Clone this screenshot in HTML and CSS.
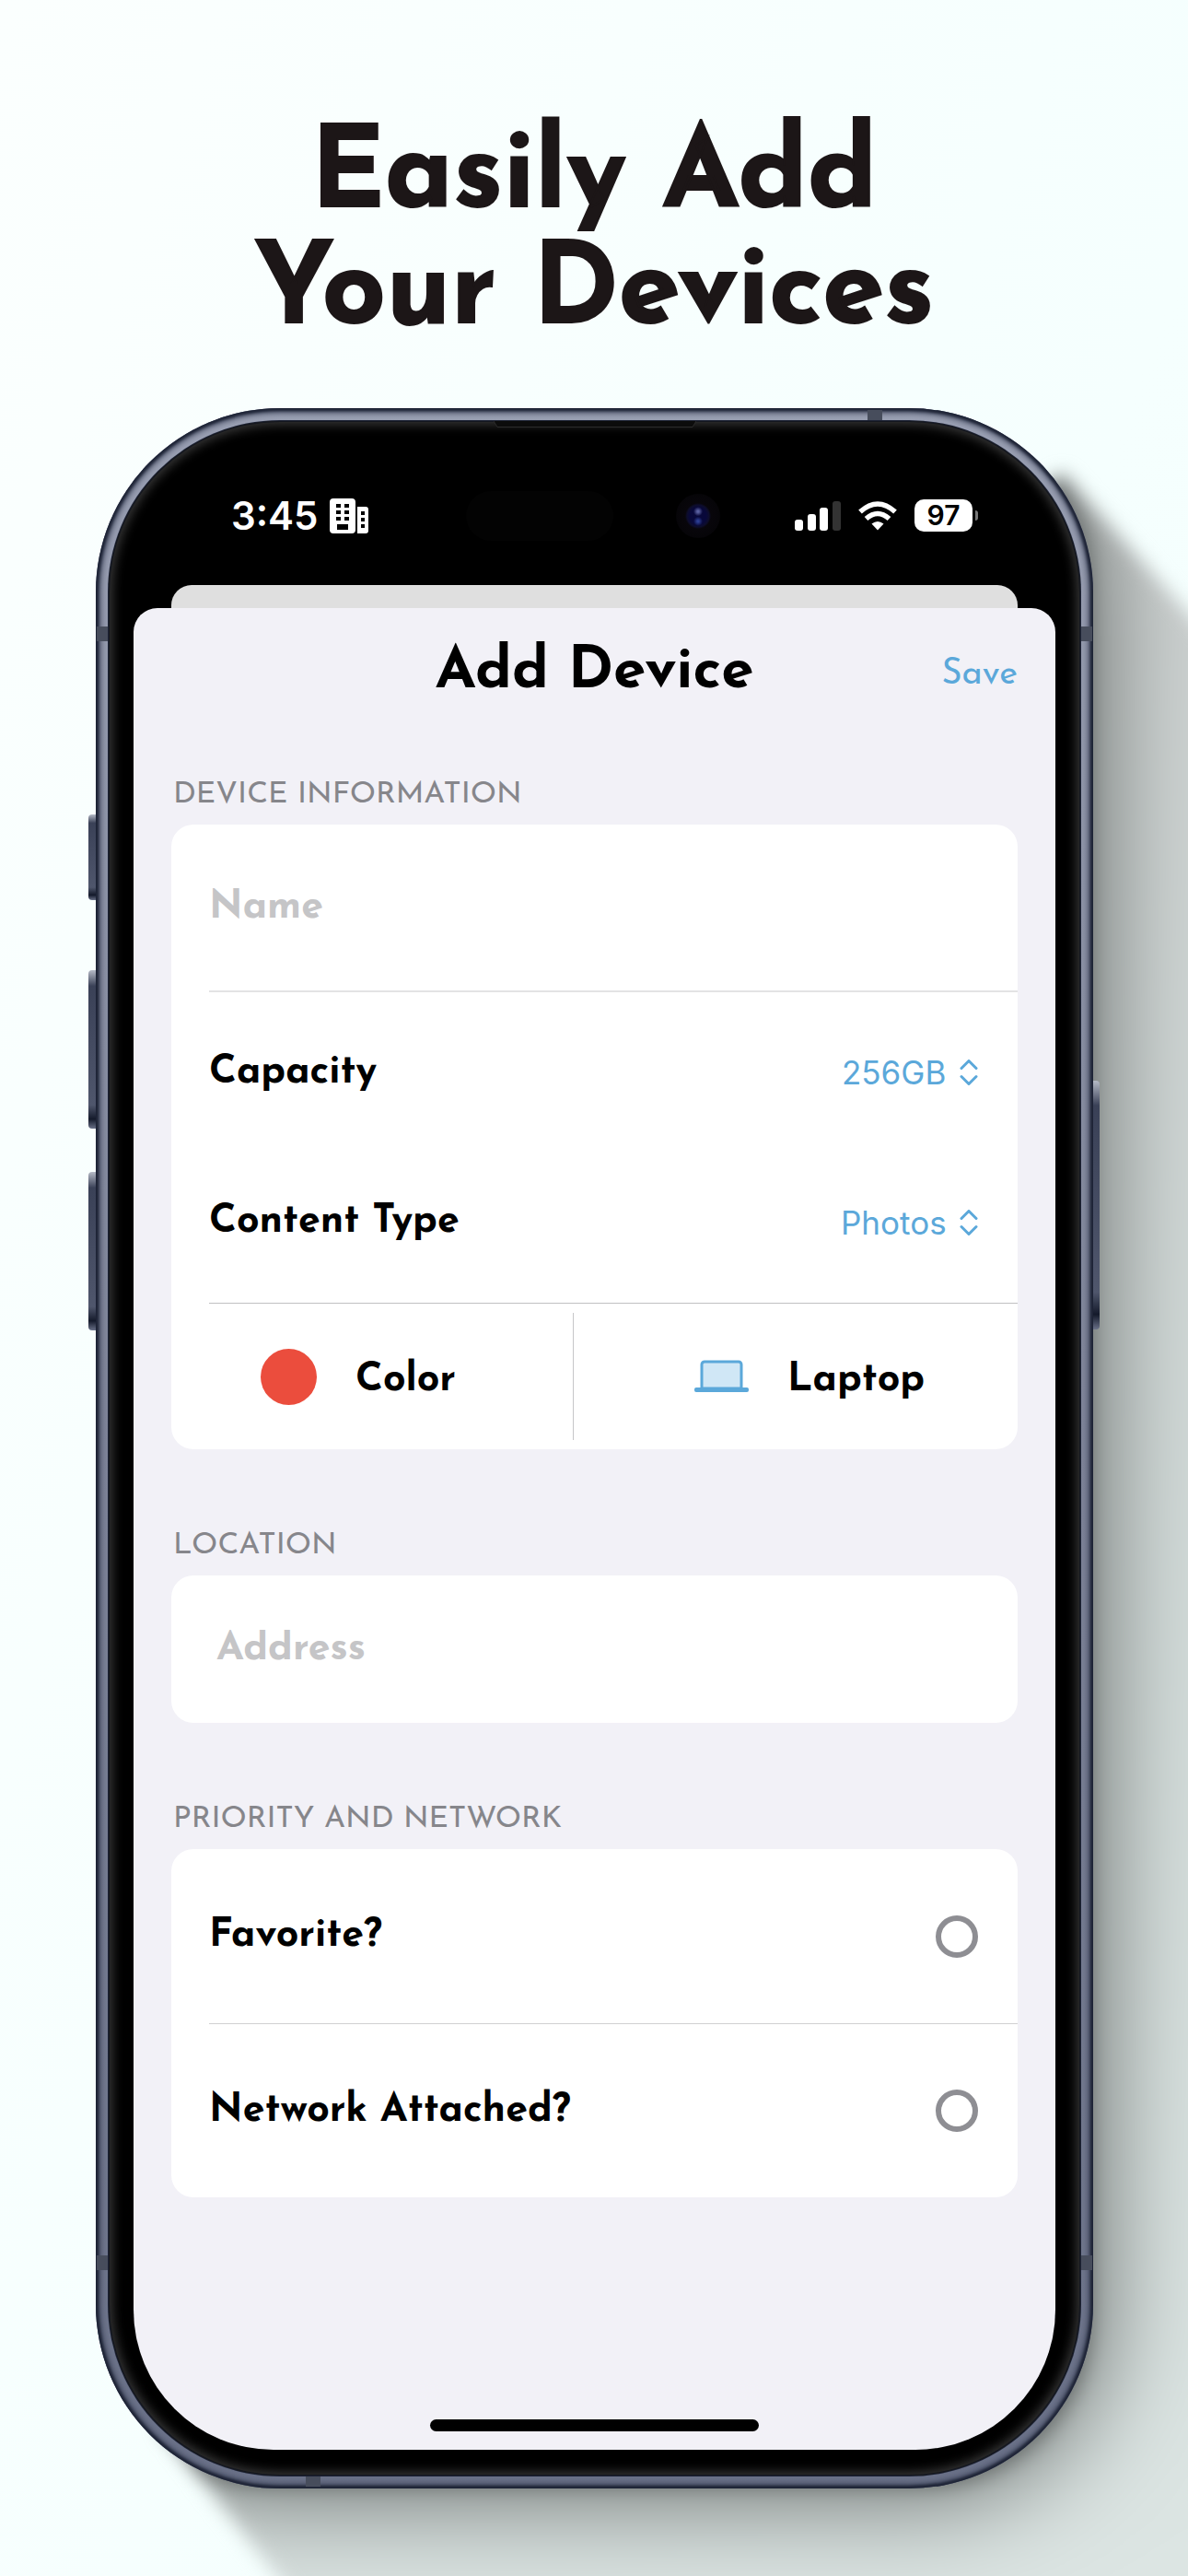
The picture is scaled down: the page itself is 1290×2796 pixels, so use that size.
FILE: index.html
```html
<!DOCTYPE html>
<html lang="en">
<head>
<meta charset="utf-8">
<meta name="viewport" content="width=device-width, initial-scale=1">
<title>Easily Add Your Devices</title>
<link rel="stylesheet" href="styles.css">
</head>
<body>
<main class="page">
  <h1 class="headline">Easily Add<br>Your Devices</h1>

  <div class="stage">
    <div class="cast" aria-hidden="true"><div class="cast-shape"><div class="cast-core"></div></div></div>
    <span class="key key-action"></span>
    <span class="key key-up"></span>
    <span class="key key-down"></span>
    <span class="key key-power"></span>

    <div class="phone">
      <span class="band band-left"></span>
      <span class="band band-right"></span>
      <span class="band band-left band-low"></span>
      <span class="band band-right band-low"></span>
      <span class="band band-top"></span>
      <span class="band band-bottom"></span>
      <div class="bezel">
        <svg class="speaker" viewBox="0 0 220 8" aria-hidden="true"><path d="M0 0 4 6.500H216L220 0" fill="#0c0c0c" stroke="#2c2c2c" stroke-width="1"/></svg>
        <div class="screen">
          <header class="status">
            <div class="clock">
              <span>3:45</span>
              <svg width="42" height="38" viewBox="0 0 42 38" aria-hidden="true">
                <path fill="#fff" fill-rule="evenodd" d="M4 0H24a4 4 0 0 1 4 4V34a4 4 0 0 1-4 4H4a4 4 0 0 1-4-4V4A4 4 0 0 1 4 0ZM7 6v4h5V6ZM16 6v4h5V6ZM7 13v4h5v-4ZM16 13v4h5v-4ZM7 20v4h5v-4ZM16 20v4h5v-4ZM8 28v6h12v-6Z"/>
                <path fill="#fff" fill-rule="evenodd" d="M30 9h9a3 3 0 0 1 3 3v23a3 3 0 0 1-3 3H30ZM34 14v4h4v-4ZM34 21v4h4v-4ZM34 28v4h4v-4Z"/>
              </svg>
            </div>
            <div class="island"><span class="sensor"></span><span class="lens"></span></div>
            <div class="signals">
              <svg width="50" height="32" viewBox="0 0 50 32" aria-hidden="true">
                <rect x="0" y="20" width="9" height="12" rx="3" fill="#fff"/>
                <rect x="14" y="14" width="9" height="18" rx="3" fill="#fff"/>
                <rect x="27" y="7" width="9" height="25" rx="3" fill="#fff"/>
                <rect x="41" y="0" width="9" height="32" rx="3" fill="#333"/>
              </svg>
              <svg width="42" height="32" viewBox="0 0 42 32" aria-hidden="true">
                <g fill="none" stroke="#fff" stroke-width="5.500"><path d="M2 11.500Q21-5.500 40 11.500"/><path d="M8.500 19Q21 8 33.500 19"/></g>
                <path d="M14.500 24.500Q21 19.500 27.500 24.500L21 31.500Z" fill="#fff"/>
              </svg>
              <span class="battery">97</span>
            </div>
          </header>

          <div class="backsheet"></div>
          <form class="sheet">
            <div class="bar">
              <h2 class="title">Add Device</h2>
              <button class="save" type="button">Save</button>
            </div>

            <h3 class="label">DEVICE INFORMATION</h3>
            <section class="card">
              <div class="row row-name"><input class="field" type="text" placeholder="Name" aria-label="Name"></div>
              <div class="row row-capacity">
                <label for="capacity">Capacity</label>
                <span class="picker"><select id="capacity"><option>256GB</option></select>
                  <svg width="20" height="28" viewBox="0 0 20 28" aria-hidden="true"><path d="M2 9.500 10 1.500l8 8M2 18.500l8 8 8-8"/></svg></span>
              </div>
              <div class="row row-type">
                <label for="type">Content Type</label>
                <span class="picker"><select id="type"><option>Photos</option></select>
                  <svg width="20" height="28" viewBox="0 0 20 28" aria-hidden="true"><path d="M2 9.500 10 1.500l8 8M2 18.500l8 8 8-8"/></svg></span>
              </div>
              <div class="choices">
                <button class="choice" type="button"><span class="dot"></span><span class="choice-name">Color</span></button>
                <button class="choice choice-device" type="button">
                  <svg width="59" height="36" viewBox="0 0 59 36" aria-hidden="true"><path d="M8 31V5a3 3 0 0 1 3-3H48a3 3 0 0 1 3 3V31Z" fill="#d0e7f6" stroke="#5ba8da" stroke-width="3"/><rect y="30" width="59" height="5" rx="2" fill="#5ba8da"/></svg><span class="choice-name">Laptop</span></button>
              </div>
            </section>

            <h3 class="label">LOCATION</h3>
            <section class="card">
              <div class="row row-address"><input class="field" type="text" placeholder="Address" aria-label="Address"></div>
            </section>

            <h3 class="label">PRIORITY AND NETWORK</h3>
            <section class="card">
              <div class="row row-toggle"><label for="fav">Favorite?</label><input class="ring" id="fav" type="checkbox"></div>
              <div class="row row-toggle"><label for="net">Network Attached?</label><input class="ring" id="net" type="checkbox"></div>
            </section>
            <div class="home"></div>
          </form>
        </div>
      </div>
    </div>
  </div>
</main>
</body>
</html>
```
FILE: styles.css
```css
* { box-sizing: border-box; }

body {
  margin: 0;
  background: #f7fffe;
  color: #000;
  font-family: "Josefin Sans", Lato, sans-serif;
}

.page {
  min-height: 100vh;
  padding: 131px 0 96px;
  overflow: hidden;
  background: linear-gradient(110deg, #fbfffe 0%, #f5fffe 60%, #f5fdfc 100%);
}

.headline {
  margin: 0 0 60px;
  color: #1c1617;
  font-size: 121px;
  font-weight: 700;
  line-height: 126px;
  text-align: center;
  -webkit-text-stroke: 2px #1c1617;
}

.stage {
  position: relative;
  margin: 0 103px 0 104px;
}

/* Long shadow falling to the lower right */
.cast {
  position: absolute;
  inset: 0 -200px -200px 0;
  filter: blur(10px);
}
.cast-shape {
  height: 100%;
  clip-path: polygon(70px 2190px, 387px 2600px, 1283px 2600px, 1283px 330px, 1050px 70px, 500px 500px);
  background: linear-gradient(165deg, #ccd1d0 20%, #d3dcda 60%, #dde6e4);
}
.cast-core {
  position: absolute;
  inset: 0 200px 200px 0;
  border-radius: 186px;
  background: #6c7170;
  box-shadow: 0 0 110px 12px #6c7170;
}

.key {
  position: absolute;
  left: -8px;
  width: 12px;
  border-radius: 4px;
  background: linear-gradient(#b5bac6, #3a4157 10%, #4f566c 85%, #141a2b 94%, #6a7188);
}
.key-action { top: 441px; height: 93px; }
.key-up { top: 610px; height: 172px; }
.key-down { top: 829px; height: 172px; }
.key-power { top: 730px; right: -7px; left: auto; height: 270px; }

.phone {
  position: relative;
  padding: 14px;
  border-radius: 200px;
  background: linear-gradient(#9aa0b3, #7d8398 50%, #6a7188);
  box-shadow: inset 0 0 3px 3px #1d2335, inset 0 0 6px 5px #3f465b;
}
.band {
  position: absolute;
  width: 12px;
  height: 16px;
  background: #474d5c;
}
.band-left { top: 237px; left: 1px; }
.band-right { top: 237px; right: 1px; }
.band-low { top: auto; bottom: 237px; }
.band-top { top: 2px; right: 229px; width: 16px; height: 11px; }
.band-bottom { bottom: 2px; left: 228px; width: 16px; height: 11px; }

.bezel {
  position: relative;
  padding: 27px 27px 28px;
  border-radius: 186px;
  background: #000;
  box-shadow: 0 0 0 1px #1d2335, inset 0 0 0 1px #14171f, inset 0 0 12px 4px #383838;
}
.speaker {
  position: absolute;
  top: 0;
  left: 50%;
  width: 220px;
  height: 8px;
  margin-left: -110px;
}
.screen {
  overflow: hidden;
  border-radius: 152px;
  background: #000;
}

.status {
  display: grid;
  grid-template-columns: 1fr 316px 1fr;
  align-items: center;
  height: 151px;
  color: #fff;
  font-family: Inter, sans-serif;
  font-weight: 600;
}
.clock {
  display: flex;
  align-items: center;
  gap: 12px;
  padding-left: 106px;
  font-size: 42px;
}
.island {
  display: flex;
  align-items: center;
  justify-content: space-between;
  height: 92px;
  padding: 0 22px 0 18px;
  border-radius: 46px;
}
.sensor {
  width: 160px;
  height: 54px;
  border-radius: 27px;
  background: #030303;
}
.lens {
  width: 48px;
  height: 48px;
  border-radius: 50%;
  background: radial-gradient(circle at 50% 40%, #5a60a0 0 1px, transparent 5px), radial-gradient(circle at 50% 62%, #2b3d91 0 1px, transparent 5px), radial-gradient(circle, #08083a 0 9px, #0d0d2c 12px, #08060b 14px, #060508 24px);
}
.signals {
  display: flex;
  align-items: center;
  justify-content: flex-end;
  gap: 19px;
  padding-right: 90px;
}
.battery {
  position: relative;
  width: 63px;
  height: 35px;
  border-radius: 10px;
  background: #fff;
  color: #000;
  font-size: 30px;
  line-height: 35px;
  text-align: center;
}
.battery::after {
  content: "";
  position: absolute;
  top: 12px;
  right: -6px;
  width: 3px;
  height: 11px;
  border-radius: 0 3px 3px 0;
  background: #777;
}

.backsheet {
  height: 25px;
  margin: 0 41px;
  border-radius: 22px 22px 0 0;
  background: #dfdfdf;
}
.sheet {
  padding: 0 41px 20px;
  border-radius: 26px 26px 0 0;
  background: #f2f1f7;
}
.bar {
  display: grid;
  grid-template-columns: 1fr auto 1fr;
  align-items: center;
  height: 140px;
}
.title {
  grid-column: 2;
  margin: 0;
  font-size: 64px;
  font-weight: 700;
}
.save {
  justify-self: end;
  padding: 4px 0 0;
  border: 0;
  background: none;
  color: #5ba8da;
  font-family: inherit;
  font-size: 38px;
}
.label {
  margin: 0;
  padding: 41px 2px 11px;
  color: #86868b;
  font-size: 33px;
  font-weight: 400;
  line-height: 43px;
}
.card {
  margin-bottom: 42px;
  border-radius: 24px;
  background: #fff;
}
.row {
  display: flex;
  align-items: center;
  justify-content: space-between;
  margin-left: 41px;
  padding-right: 43px;
  font-size: 43px;
  font-weight: 700;
}
.row-name { height: 182px; border-bottom: 2px solid #e3e3e4; }
.row-capacity { height: 174px; }
.row-type { height: 164px; padding-bottom: 12px; border-bottom: 1px solid #c0c0c2; }
.row-address { height: 160px; padding-left: 8px; }
.row-toggle { height: 189px; }
.row-toggle + .row-toggle { border-top: 1px solid #d0d0d2; }
.field {
  width: 100%;
  padding: 0;
  border: 0;
  outline: 0;
  background: none;
  font: inherit;
}
.field::placeholder { color: #c5c5c7; opacity: 1; }
.picker {
  display: flex;
  align-items: center;
  gap: 14px;
}
.picker select {
  padding: 0;
  border: 0;
  appearance: none;
  background: none;
  color: #5ba8da;
  font-family: Inter, sans-serif;
  font-size: 35px;
}
.picker path {
  fill: none;
  stroke: #5ba8da;
  stroke-linecap: round;
  stroke-linejoin: round;
  stroke-width: 3;
}
.choices {
  display: grid;
  grid-template-columns: 436px 1fr;
  height: 158px;
  padding: 10px 0;
}
.choice {
  display: flex;
  align-items: center;
  gap: 42px;
  padding: 0 0 0 97px;
  border: 0;
  background: none;
  color: #000;
  font-family: inherit;
  font-size: 43px;
  font-weight: 700;
}
.choice-name { padding-top: 8px; }
.choice-device {
  padding-left: 131px;
  border-left: 1px solid #c6c6c8;
}
.dot {
  width: 61px;
  height: 61px;
  border-radius: 50%;
  background: #eb4d3d;
}
.ring {
  width: 46px;
  height: 46px;
  margin: 0;
  border: 6px solid #8e8e93;
  border-radius: 50%;
  appearance: none;
}
.home {
  width: 357px;
  height: 13px;
  margin: 241px auto 0;
  border-radius: 7px;
  background: #000;
}
```
